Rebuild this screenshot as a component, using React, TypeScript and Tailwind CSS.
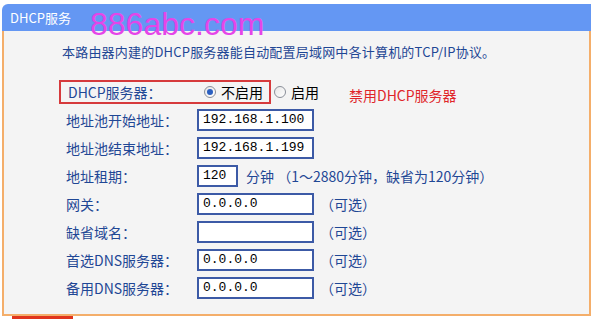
import React from 'react';

const font = { fontFamily: '"Noto Sans CJK SC", "Liberation Sans", sans-serif' };

const Radio: React.FC<{ checked?: boolean }> = ({ checked }) => (
  <span className="w-[12px] h-[12px] rounded-full border border-[#8a8f99] bg-gradient-to-br from-[#e6e6e6] to-white flex items-center justify-center shrink-0">
    {checked && <span className="w-[6px] h-[6px] rounded-full bg-[#2a5fc0]" />}
  </span>
);

const Field: React.FC<{ value: string; w?: string }> = ({ value, w = 'w-[117px]' }) => (
  <div
    className={`${w} h-[22px] bg-white border-2 border-[#3c5aa6] flex items-center pl-[4px] text-[13px] text-black`}
    style={{ fontFamily: '"Liberation Mono", monospace' }}
  >
    {value}
  </div>
);

const rows = [
  { label: '地址池开始地址：', value: '192.168.1.100' },
  { label: '地址池结束地址：', value: '192.168.1.199' },
];

const optional = [
  { label: '网关：', value: '0.0.0.0' },
  { label: '缺省域名：', value: '' },
  { label: '首选DNS服务器：', value: '0.0.0.0' },
  { label: '备用DNS服务器：', value: '0.0.0.0' },
];

export default function App() {
  return (
    <div className="w-[597px] h-[319px] bg-white relative overflow-hidden" style={font}>
      <div className="ml-[2px] pt-[4px] w-[589px]">
        <div className="h-[27px] bg-[#6497f3] rounded-tl-[6px] flex items-center pl-[8px] text-white text-[13px]">
          DHCP服务
        </div>
        <div className="h-[285px] bg-[#f4f4f4] border-l-2 border-r-2 border-b-2 border-[#f4ae6a] text-[#1f4795] text-[14px]">
          <div className="pl-[58px] pt-[11px] h-[47px] text-[13px] leading-[20px] tracking-[0.2px]">
            本路由器内建的DHCP服务器能自动配置局域网中各计算机的TCP/IP协议。
          </div>
          <div className="pl-[55px]">
            <div className="h-[28px] flex items-center">
              <div className="w-[212px] h-[24px] border-2 border-[#d63a3c] flex items-center pl-[7px]">
                <span className="w-[136px]">DHCP服务器：</span>
                <Radio checked />
                <span className="ml-[5px] text-black">不启用</span>
              </div>
              <span className="ml-[3px]"><Radio /></span>
              <span className="ml-[5px] text-black">启用</span>
              <span className="ml-[30px] text-[#e0252a] mt-[6px]">禁用DHCP服务器</span>
            </div>
            {rows.map(r => (
              <div key={r.label} className="h-[28px] flex items-center pl-[7px]">
                <span className="w-[131px]">{r.label}</span>
                <Field value={r.value} />
              </div>
            ))}
            <div className="h-[28px] flex items-center pl-[7px]">
              <span className="w-[131px]">地址租期：</span>
              <Field value="120" w="w-[41px]" />
              <span className="ml-[8px]">分钟 （1～2880分钟，缺省为120分钟）</span>
            </div>
            {optional.map(r => (
              <div key={r.label} className="h-[28px] flex items-center pl-[7px]">
                <span className="w-[131px]">{r.label}</span>
                <Field value={r.value} />
                <span className="ml-[6px]">（可选）</span>
              </div>
            ))}
          </div>
        </div>
        <div className="ml-[10px] w-[61px] h-[3px] bg-[#e0341c]" />
      </div>
      <div
        className="absolute left-[90px] top-[6px] text-[32px] leading-[36px] text-[#e545e8]"
        style={{ fontFamily: '"Liberation Sans", Arial, sans-serif' }}
      >
        886abc.com
      </div>
    </div>
  );
}
